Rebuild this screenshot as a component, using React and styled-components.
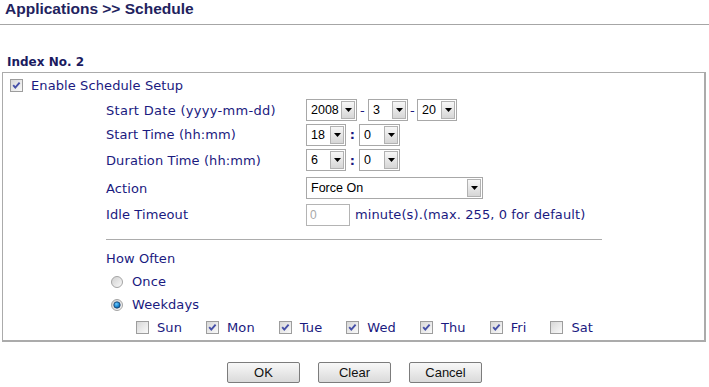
import React from 'react';
import styled, { createGlobalStyle } from 'styled-components';

const Global = createGlobalStyle`
  html, body { margin: 0; padding: 0; background: #fff; }
  body {
    font-family: "DejaVu Sans", Verdana, sans-serif;
    font-size: 13px;
    letter-spacing: 0.1px;
    color: #1a1a80;
  }
`;

const Page = styled.div`
  width: 709px;
  height: 387px;
  overflow: hidden;
`;

const TitleBar = styled.h1`
  margin: 0;
  height: 25px;
  box-sizing: border-box;
  padding: 0 0 0 5px;
  font: bold 15.5px/17px "Liberation Sans", Arial, sans-serif;
  letter-spacing: 0;
  color: #22225e;
  border-bottom: 1px solid #a6a6a6;
`;

const IndexTitle = styled.h2`
  margin: 30px 0 3px 7px;
  font: bold 12px/14px "DejaVu Sans", Verdana, sans-serif;
  letter-spacing: 0;
  color: #1b1b60;
`;

const Panel = styled.div`
  margin-left: 2px;
  width: 704px;
  height: 270px;
  box-sizing: border-box;
  border-style: solid;
  border-color: #ababab;
  border-width: 1px 2px 2px 1px;
`;

const Row = styled.div`
  display: flex;
  align-items: center;
  height: ${p => p.$h}px;
  padding-left: ${p => p.$indent || 0}px;
  gap: ${p => p.$gap || 0}px;
`;

const FormArea = styled.div`
  padding-left: 103px;
`;

const FormRow = styled.div`
  display: grid;
  grid-template-columns: 200px auto;
  align-items: center;
  height: ${p => p.$h}px;
`;

const Label = styled.span`
  white-space: nowrap;
  letter-spacing: ${p => (p.$wide ? '0.3px' : 'inherit')};
`;

const Controls = styled.div`
  display: flex;
  align-items: center;
`;

const SelectBox = styled.div`
  display: inline-flex;
  align-items: center;
  box-sizing: border-box;
  width: ${p => p.$w}px;
  height: 22px;
  border: 1px solid #a8a8a8;
  background: #fff;
  padding: 0 1px 0 4px;
  font: 12.5px "Liberation Sans", Arial, sans-serif;
  letter-spacing: 0;
  color: #000;
`;

const SelectValue = styled.span`
  flex: 1;
  white-space: nowrap;
`;

const ArrowBtn = styled.span`
  width: 14px;
  height: 18px;
  box-sizing: border-box;
  border: 1px solid #b2b2b2;
  background: linear-gradient(#f7f7f7, #d6d6d6);
  display: flex;
  align-items: center;
  justify-content: center;
`;

const Sep = styled.span`
  width: ${p => p.$w}px;
  text-align: center;
  font-weight: ${p => (p.$bold ? 'bold' : 'normal')};
`;

const TextInput = styled.input`
  width: 44px;
  height: 22px;
  box-sizing: border-box;
  border: 1px solid #b4b4b4;
  padding: 0 3px;
  margin: 0 5px 0 0;
  font: 12px "Liberation Sans", Arial, sans-serif;
  &:disabled {
    background: #fff;
    color: #a8a8a8;
  }
`;

const Divider = styled.hr`
  margin: 13px 0 0 0;
  width: 496px;
  border: 0;
  border-top: 1px solid #acacac;
  height: 0;
`;

const DayItem = styled.label`
  display: flex;
  align-items: center;
  gap: 8px;
`;

const ButtonBar = styled.div`
  display: flex;
  justify-content: center;
  gap: 18px;
  margin-top: 20px;
`;

const Button = styled.button`
  width: 73px;
  height: 21px;
  box-sizing: border-box;
  border: 1px solid #7c7c7c;
  border-radius: 2px;
  background: linear-gradient(#f8f8f8, #dadada);
  font: 13px "Liberation Sans", Arial, sans-serif;
  color: #111;
  padding: 0;
`;

const Arrow = () => (
  <svg width="7" height="4" viewBox="0 0 7 4">
    <polygon points="0,0 7,0 3.5,4" fill="#000" />
  </svg>
);

const Select = ({ w, value }) => (
  <SelectBox $w={w}>
    <SelectValue>{value}</SelectValue>
    <ArrowBtn>
      <Arrow />
    </ArrowBtn>
  </SelectBox>
);

const Checkbox = ({ checked }) => (
  <svg width="13" height="13" viewBox="0 0 13 13">
    <defs>
      <linearGradient id="cbFill" x1="0" y1="0" x2="1" y2="1">
        <stop offset="0" stopColor="#d6d6d6" />
        <stop offset="1" stopColor="#fbfbfb" />
      </linearGradient>
    </defs>
    <rect x="0.5" y="0.5" width="12" height="12" fill="url(#cbFill)" stroke="#9d9d9d" />
    {checked && (
      <path d="M3.2 6.2 L5.3 8.6 L9.6 3.6" fill="none" stroke="#4650a8" strokeWidth="1.9" />
    )}
  </svg>
);

const Radio = ({ checked }) => (
  <svg width="12" height="12" viewBox="0 0 12 12">
    <defs>
      <linearGradient id="rdFill" x1="0" y1="0" x2="1" y2="1">
        <stop offset="0" stopColor="#cfcfcf" />
        <stop offset="1" stopColor="#fafafa" />
      </linearGradient>
      <radialGradient id="rdDot" cx="0.4" cy="0.35" r="0.7">
        <stop offset="0" stopColor="#6fcbff" />
        <stop offset="0.6" stopColor="#1a86d0" />
        <stop offset="1" stopColor="#0d4f86" />
      </radialGradient>
    </defs>
    <circle cx="6" cy="6" r="5.5" fill="url(#rdFill)" stroke="#a4a4a4" />
    {checked && <circle cx="6" cy="6" r="3.2" fill="url(#rdDot)" stroke="#1c3f6c" strokeWidth="0.8" />}
  </svg>
);

const days = [
  ['Sun', false],
  ['Mon', true],
  ['Tue', true],
  ['Wed', true],
  ['Thu', true],
  ['Fri', true],
  ['Sat', false],
];

export default function App() {
  return (
    <Page>
      <Global />
      <TitleBar>Applications &gt;&gt; Schedule</TitleBar>
      <IndexTitle>Index No. 2</IndexTitle>
      <Panel>
        <Row $h={25} $indent={7} $gap={8}>
          <Checkbox checked />
          <Label>Enable Schedule Setup</Label>
        </Row>
        <FormArea>
          <FormRow $h={24}>
            <Label $wide>Start Date (yyyy-mm-dd)</Label>
            <Controls>
              <Select w={51} value="2008" />
              <Sep $w={11}>-</Sep>
              <Select w={40} value="3" />
              <Sep $w={9}>-</Sep>
              <Select w={40} value="20" />
            </Controls>
          </FormRow>
          <FormRow $h={25}>
            <Label>Start Time (hh:mm)</Label>
            <Controls>
              <Select w={40} value="18" />
              <Sep $w={13} $bold>:</Sep>
              <Select w={41} value="0" />
            </Controls>
          </FormRow>
          <FormRow $h={26}>
            <Label>Duration Time (hh:mm)</Label>
            <Controls>
              <Select w={40} value="6" />
              <Sep $w={13} $bold>:</Sep>
              <Select w={41} value="0" />
            </Controls>
          </FormRow>
          <FormRow $h={30}>
            <Label>Action</Label>
            <Controls>
              <Select w={177} value="Force On" />
            </Controls>
          </FormRow>
          <FormRow $h={23}>
            <Label>Idle Timeout</Label>
            <Controls>
              <TextInput disabled defaultValue="0" />
              <Label>minute(s).(max. 255, 0 for default)</Label>
            </Controls>
          </FormRow>
          <Divider />
          <Row $h={22} style={{ marginTop: 7 }}>
            <Label>How Often</Label>
          </Row>
          <Row $h={25} $indent={5} $gap={9}>
            <Radio />
            <Label>Once</Label>
          </Row>
          <Row $h={21} $indent={5} $gap={9}>
            <Radio checked />
            <Label>Weekdays</Label>
          </Row>
          <Row $h={24} $indent={30} $gap={24}>
            {days.map(([d, c]) => (
              <DayItem key={d}>
                <Checkbox checked={c} />
                <Label>{d}</Label>
              </DayItem>
            ))}
          </Row>
        </FormArea>
      </Panel>
      <ButtonBar>
        <Button>OK</Button>
        <Button>Clear</Button>
        <Button>Cancel</Button>
      </ButtonBar>
    </Page>
  );
}
